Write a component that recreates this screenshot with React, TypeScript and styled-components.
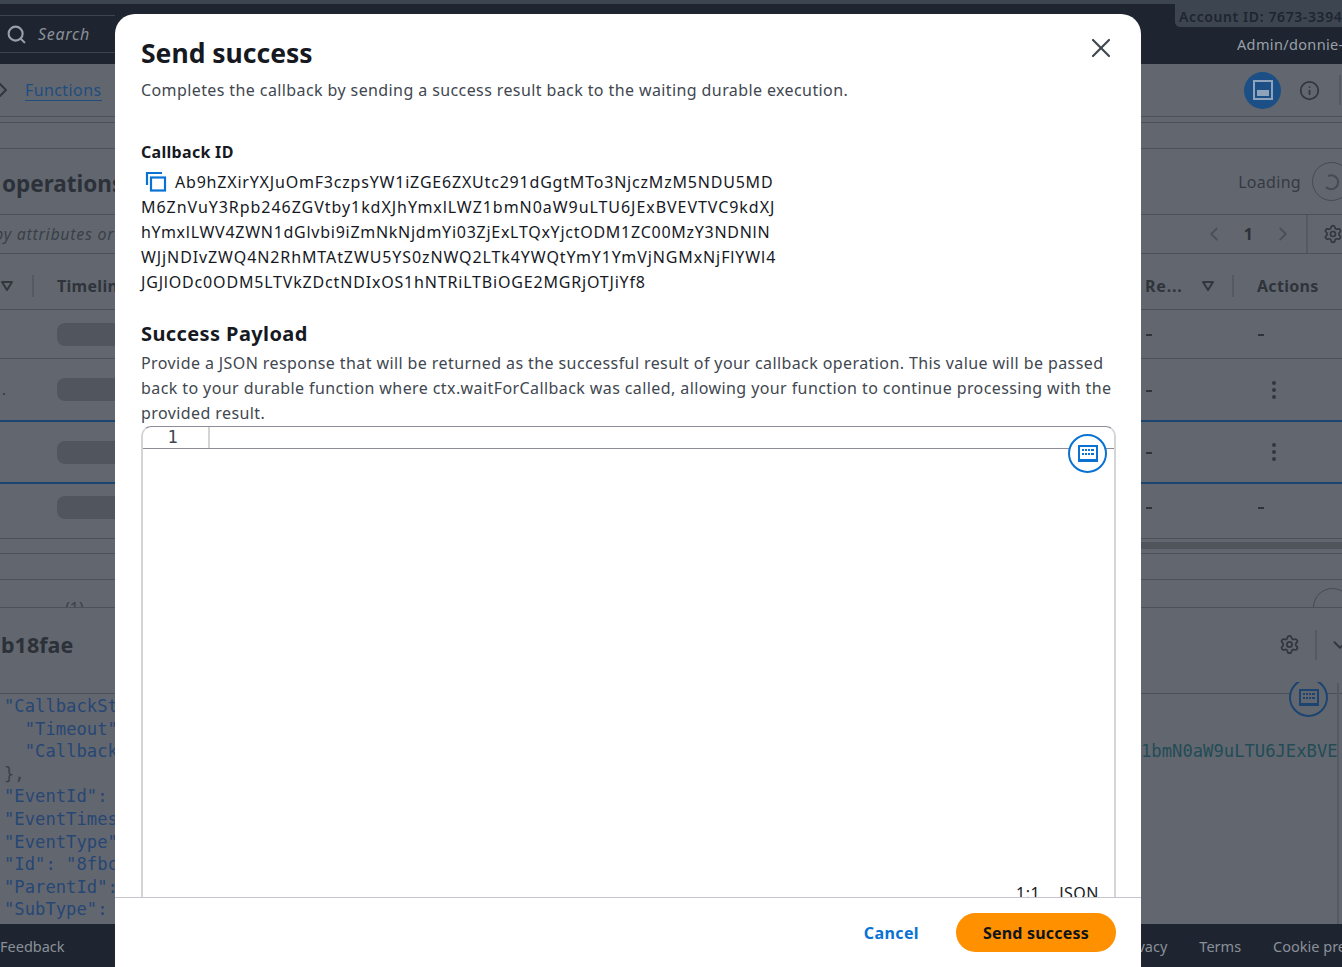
import React from 'react'
import styled, { createGlobalStyle } from 'styled-components'
import { ChevronDown, ChevronLeft, ChevronRight, Info, Search, Settings, X } from 'lucide-react'

const callbackLines = [
  { text: 'Ab9hZXirYXJuOmF3czpsYW1iZGE6ZXUtc291dGgtMTo3NjczMzM5NDU5MD', spacing: 0.8 },
  { text: 'M6ZnVuY3Rpb246ZGVtby1kdXJhYmxlLWZ1bmN0aW9uLTU6JExBVEVTVC9kdXJ', spacing: 0.95 },
  { text: 'hYmxlLWV4ZWN1dGlvbi9iZmNkNjdmYi03ZjExLTQxYjctODM1ZC00MzY3NDNlN', spacing: 0.73 },
  { text: 'WJjNDIvZWQ4N2RhMTAtZWU5YS0zNWQ2LTk4YWQtYmY1YmVjNGMxNjFlYWl4', spacing: 0.9 },
  { text: 'JGJlODc0ODM5LTVkZDctNDIxOS1hNTRiLTBiOGE2MGRjOTJiYf8', spacing: 0.82 },
]

const codeLines = [
  { text: '"CallbackSt', indent: 0 },
  { text: '"Timeout"', indent: 2 },
  { text: '"Callback', indent: 2 },
  { text: '},', indent: 0, plain: true },
  { text: '"EventId":', indent: 0 },
  { text: '"EventTimes', indent: 0 },
  { text: '"EventType"', indent: 0 },
  { text: '"Id": "8fbc', indent: 0 },
  { text: '"ParentId":', indent: 0 },
  { text: '"SubType":', indent: 0 },
]

const GlobalStyle = createGlobalStyle`
  html, body {
    margin: 0;
    padding: 0;
    background: #62676f;
  }
  body {
    font-family: "Noto Sans", "Open Sans", sans-serif;
    overflow: hidden;
  }
  * {
    box-sizing: border-box;
  }
`

const Page = styled.div`
  position: relative;
  display: flex;
  flex-direction: column;
  height: 967px;
  overflow: hidden;
  background: #62676f;
  color: #32373e;
`

const TopStrip = styled.div`
  height: 4px;
  background: #3d4650;
`

const Nav = styled.header`
  display: flex;
  justify-content: space-between;
  height: 60px;
  background: #1e2530;
`

const SearchBox = styled.div`
  display: flex;
  align-items: center;
  gap: 11px;
  width: 115px;
  height: 38px;
  margin-top: 11px;
  padding-left: 6px;
  border-top: 1px solid #3d4650;
  border-bottom: 1px solid #3d4650;
  color: #8a9099;
  font-size: 16px;
  font-style: italic;
  letter-spacing: 0.7px;
`

const NavRight = styled.div`
  display: flex;
  flex-direction: column;
  align-items: flex-end;
  width: 167px;
`

const AccountChip = styled.div`
  width: 100%;
  height: 23px;
  padding-left: 4px;
  border-bottom-left-radius: 5px;
  background: #3d4650;
  color: #1e2530;
  font-size: 14px;
  font-weight: 600;
  line-height: 26px;
  letter-spacing: 0.6px;
  white-space: nowrap;
  overflow: hidden;
`

const UserName = styled.div`
  width: 105px;
  margin-top: 6px;
  color: #9aa0a8;
  font-size: 14.5px;
  line-height: 22px;
  letter-spacing: 0.35px;
  white-space: nowrap;
  overflow: hidden;
`

const Band = styled.div<{ $h: number; $clip?: boolean; $selected?: boolean; $top?: number; $bottom?: number }>`
  display: flex;
  flex-shrink: 0;
  justify-content: space-between;
  align-items: center;
  height: ${(p) => p.$h}px;
  padding-top: ${(p) => p.$top ?? 0}px;
  padding-bottom: ${(p) => p.$bottom ?? 0}px;
  border-bottom: ${(p) => (p.$selected ? '2px solid #1c4471' : '1px solid #4c5159')};
  overflow: ${(p) => (p.$clip ? 'hidden' : 'visible')};
`

const Side = styled.div<{ $pad?: number; $gap?: number }>`
  display: flex;
  align-items: center;
  gap: ${(p) => p.$gap ?? 0}px;
  padding-left: ${(p) => p.$pad ?? 0}px;
  white-space: nowrap;
`

const Crumb = styled.a`
  color: #1f4d80;
  font-size: 16px;
  line-height: 20px;
  letter-spacing: 0.4px;
  border-bottom: 1px solid #1f4d80;
`

const PanelToggle = styled.span`
  display: flex;
  align-items: center;
  justify-content: center;
  width: 37px;
  height: 37px;
  border-radius: 50%;
  background: #1b4f86;
`

const IconSlot = styled.span<{ $w: number }>`
  display: flex;
  justify-content: center;
  width: ${(p) => p.$w}px;
  color: #32373e;
`

const VDivider = styled.span<{ $h?: number; $c?: string }>`
  display: block;
  width: 2px;
  height: ${(p) => p.$h ?? 24}px;
  background: ${(p) => p.$c ?? '#555a62'};
`

const SectionTitle = styled.h2`
  margin: 0;
  padding: 3px 0 0 2px;
  color: #2c3139;
  font-size: 22.5px;
  font-weight: 700;
`

const LoadingText = styled.span`
  color: #353a42;
  font-size: 16px;
  letter-spacing: 0.3px;
`

const SpinnerRing = styled.span`
  display: flex;
  align-items: center;
  justify-content: center;
  width: 39px;
  height: 39px;
  margin-right: -9px;
  border: 1px solid #454b53;
  border-radius: 50%;
  flex-shrink: 0;
`

const FilterHint = styled.span`
  margin-left: -6px;
  color: #3a4048;
  font-size: 16px;
  font-style: italic;
  letter-spacing: 0.7px;
`

const PageNumber = styled.span`
  color: #2c3139;
  font-size: 16px;
  font-weight: 700;
`

const ColumnTitle = styled.span<{ $ls?: number }>`
  color: #2f343b;
  font-size: 16px;
  font-weight: 700;
  letter-spacing: ${(p) => p.$ls ?? 0.3}px;
`

const RightCells = styled.div`
  display: grid;
  grid-template-columns: 112px 85px;
  align-items: center;
  width: 197px;
`

const HeaderCell = styled.div`
  display: flex;
  align-items: center;
  gap: 18px;
`

const SkeletonPill = styled.span`
  display: block;
  width: 100px;
  height: 23px;
  border-radius: 8px;
  background: #51565e;
`

const RowMark = styled.span`
  position: absolute;
  left: 2px;
  color: #2c3139;
  font-size: 14px;
`

const Dash = styled.span`
  display: block;
  width: 6px;
  height: 2px;
  margin: 2px 0 0 1px;
  background: #2f343b;
`

const Kebab = styled.span`
  display: flex;
  flex-direction: column;
  gap: 3px;
  margin-left: 15px;
  i {
    display: block;
    width: 4px;
    height: 4px;
    border-radius: 50%;
    background: #32373e;
  }
`

const ScrollTrack = styled.div`
  width: 201px;
  height: 7px;
  margin-top: -1px;
  background: #50555c;
`

const ClippedCount = styled.span`
  color: #3a4048;
  font-size: 16px;
  transform: translateY(14px);
`

const ClippedRing = styled.span`
  display: block;
  width: 39px;
  height: 39px;
  margin: 28px -10px 0 0;
  border: 1px solid #454b53;
  border-radius: 50%;
`

const DetailTitle = styled.h3`
  margin: 0;
  padding-left: 1px;
  color: #2c3139;
  font-size: 21.5px;
  font-weight: 700;
`

const DetailActions = styled.div`
  display: flex;
  align-items: center;
  gap: 17px;
  margin-right: -9px;
`

const CodePanel = styled.section`
  position: relative;
  flex: 1;
  min-height: 0;
  padding: 1px 0 0 4px;
`

const CodeLine = styled.div<{ $indent: number; $plain?: boolean }>`
  padding-left: ${(p) => p.$indent * 10.37}px;
  color: ${(p) => (p.$plain ? '#3a4048' : '#274674')};
  font-family: "DejaVu Sans Mono", "Liberation Mono", monospace;
  font-size: 17.2px;
  line-height: 22.6px;
  white-space: pre;
`

const CodeOverlay = styled.div`
  position: absolute;
  top: -11px;
  right: 3px;
  bottom: 0;
  width: 198px;
  padding-top: 57px;
  border-right: 2px solid #555a62;
`

const TealValue = styled.div`
  color: #234c57;
  font-family: "DejaVu Sans Mono", "Liberation Mono", monospace;
  font-size: 17.2px;
  line-height: 22.6px;
  white-space: nowrap;
`

const FloatingKeyboard = styled.span`
  position: absolute;
  top: -5px;
  right: 9px;
  display: flex;
  align-items: center;
  justify-content: center;
  width: 39px;
  height: 39px;
  border: 2px solid #1c4471;
  border-radius: 50%;
  background: #62676f;
  color: #1c4471;
  clip-path: inset(4px 0 0 0);
`

const Footer = styled.footer`
  display: flex;
  flex-shrink: 0;
  justify-content: space-between;
  align-items: center;
  height: 43px;
  background: #1e2530;
  color: #8a9099;
  font-size: 14.5px;
  white-space: nowrap;
`

const FooterLinks = styled.div`
  display: flex;
  gap: 32px;
  width: 250px;
  padding-left: 27px;
`

/* the dialog */

const Modal = styled.div`
  position: absolute;
  top: 14px;
  bottom: 0;
  left: 115px;
  display: flex;
  flex-direction: column;
  width: 1026px;
  border-radius: 20px 20px 0 0;
  background: #fff;
  color: #16191f;
`

const CloseButton = styled.button`
  position: absolute;
  top: 18px;
  right: 24px;
  display: flex;
  padding: 0;
  border: 0;
  background: none;
  color: #414750;
`

const ModalBody = styled.div`
  flex: 1;
  min-height: 0;
  padding: 20px 25px 0 26px;
  overflow: hidden;
`

const ModalTitle = styled.h1`
  margin: 0;
  font-size: 26.5px;
  font-weight: 700;
  line-height: 38px;
`

const ModalSubtitle = styled.p`
  margin: 6px 0 0;
  color: #414750;
  font-size: 16px;
  line-height: 25px;
  letter-spacing: 0.4px;
`

const FieldLabel = styled.div`
  margin-top: 37px;
  font-size: 16px;
  font-weight: 700;
  line-height: 25px;
  letter-spacing: 0.3px;
`

const IdBlock = styled.div`
  margin-top: 4px;
`

const IdLine = styled.div<{ $spacing: number }>`
  display: flex;
  align-items: center;
  height: 25px;
  color: #16191f;
  font-size: 16px;
  letter-spacing: ${(p) => p.$spacing}px;
  white-space: nowrap;
`

const CopyGlyph = styled.svg`
  flex-shrink: 0;
  margin: 0 8px 0 4px;
`

const PayloadTitle = styled.h2`
  margin: 25px 0 0;
  font-size: 20px;
  font-weight: 700;
  line-height: 30px;
  letter-spacing: 0.4px;
`

const PayloadHint = styled.p`
  margin: 2px 0 0;
  color: #414750;
  font-size: 16px;
  line-height: 25px;
  letter-spacing: 0.41px;
`

const Editor = styled.div`
  position: relative;
  display: flex;
  flex-direction: column;
  width: 975px;
  height: 490px;
  border: 2px solid #d5d5d8;
  border-top: 1px solid #8d8d99;
  border-radius: 10px 10px 0 0;
`

const EditorLine = styled.div`
  display: flex;
  height: 22px;
  border-bottom: 1px solid #8d8d99;
`

const Gutter = styled.div`
  width: 67px;
  padding-right: 6px;
  border-right: 2px solid #d5d5d8;
  color: #414750;
  font-family: "DejaVu Sans Mono", monospace;
  font-size: 17px;
  line-height: 21px;
  text-align: center;
`

const KeyboardButton = styled.button`
  position: absolute;
  top: 7px;
  right: 7px;
  display: flex;
  align-items: center;
  justify-content: center;
  width: 39px;
  height: 39px;
  padding: 0;
  border: 2px solid #0972d3;
  border-radius: 50%;
  background: #fff;
  color: #0972d3;
`

const StatusBar = styled.div`
  display: flex;
  justify-content: flex-end;
  gap: 19px;
  margin-top: auto;
  padding: 0 15px 9px 0;
  font-size: 16px;
  line-height: 24px;
  letter-spacing: 0.5px;
`

const ModalFooter = styled.div`
  display: flex;
  flex-shrink: 0;
  justify-content: flex-end;
  align-items: center;
  gap: 37px;
  height: 70px;
  padding: 0 25px 0 0;
  border-top: 1px solid #c6c6cd;
`

const CancelButton = styled.button`
  padding: 0;
  border: 0;
  background: none;
  color: #0972d3;
  font-family: inherit;
  font-size: 16px;
  font-weight: 700;
  letter-spacing: 0.4px;
`

const PrimaryButton = styled.button`
  width: 160px;
  height: 39px;
  border: 0;
  border-radius: 20px;
  background: #ff9000;
  color: #0f141a;
  font-family: inherit;
  font-size: 16px;
  font-weight: 700;
  letter-spacing: 0.2px;
`

const CaretOutline = () => (
  <svg width="14" height="12" viewBox="0 0 14 12" fill="none">
    <path d="M2 2h10L7 10z" stroke="#32373e" strokeWidth="2" strokeLinejoin="round" />
  </svg>
)

const KeyboardIcon = () => (
  <svg width="20" height="17" viewBox="0 0 20 17" fill="currentColor">
    <path d="M0 0h20v17H0zM2 2v12h16V2z" fillRule="evenodd" />
    <path d="M4 4h2v2H4zM7 4h2v2H7zM10 4h2v2h-2zM13 4h3v2h-3zM4 8h2v2H4zM7 8h2v2H7zM10 8h2v2h-2zM13 8h3v2h-3z" />
  </svg>
)

const PanelIcon = () => (
  <svg width="20" height="20" viewBox="0 0 20 20" fill="none">
    <rect x="1" y="1" width="18" height="18" stroke="#8fa3ba" strokeWidth="2" />
    <rect x="4" y="10" width="12" height="6" fill="#8fa3ba" />
  </svg>
)

const SpinnerArc = () => (
  <svg width="20" height="20" viewBox="0 0 20 20" fill="none">
    <path d="M6 4a7 7 0 1 1-2 11" stroke="#454b53" strokeWidth="2" />
  </svg>
)

const KebabMenu = () => (
  <Kebab>
    <i />
    <i />
    <i />
  </Kebab>
)

const TableRow = ({
  h,
  selected,
  menu,
  mark,
  bottom,
}: {
  h: number
  selected?: boolean
  menu?: boolean
  mark?: boolean
  bottom?: number
}) => (
  <Band $h={h} $selected={selected} $bottom={bottom}>
    <Side $pad={57}>
      {mark && <RowMark>.</RowMark>}
      <SkeletonPill />
    </Side>
    <RightCells>
      <Dash />
      {menu ? <KebabMenu /> : <Dash />}
    </RightCells>
  </Band>
)

export default function App() {
  return (
    <Page>
      <GlobalStyle />
      <TopStrip />
      <Nav>
        <SearchBox>
          <Search size={21} strokeWidth={2.4} color="#9aa0a8" />
          Search
        </SearchBox>
        <NavRight>
          <AccountChip>Account ID: 7673-3394-5903</AccountChip>
          <UserName>Admin/donnie-prakoso</UserName>
        </NavRight>
      </Nav>

      <Band $h={53}>
        <Side $gap={10}>
          <ChevronRight size={24} color="#32373e" style={{ marginLeft: -9 }} />
          <Crumb>Functions</Crumb>
        </Side>
        <Side $gap={12} style={{ marginRight: 1 }}>
          <PanelToggle>
            <PanelIcon />
          </PanelToggle>
          <IconSlot $w={32}>
            <Info size={21} />
          </IconSlot>
          <VDivider $h={30} style={{ marginLeft: 2 }} />
        </Side>
      </Band>
      <Band $h={6} />
      <Band $h={26} />
      <Band $h={66}>
        <SectionTitle>operations</SectionTitle>
        <Side $gap={11}>
          <LoadingText>Loading</LoadingText>
          <SpinnerRing>
            <SpinnerArc />
          </SpinnerRing>
        </Side>
      </Band>
      <Band $h={39}>
        <FilterHint>by attributes or</FilterHint>
        <Side $gap={19} style={{ marginRight: -1 }}>
          <ChevronLeft size={22} color="#4a5058" />
          <PageNumber>1</PageNumber>
          <ChevronRight size={22} color="#4a5058" />
          <VDivider $h={38} style={{ marginLeft: -7 }} />
          <Settings size={20} color="#32373e" style={{ marginLeft: -4 }} />
        </Side>
      </Band>
      <Band $h={56} $top={8}>
        <Side $gap={18}>
          <CaretOutline />
          <VDivider $h={22} />
          <ColumnTitle style={{ marginLeft: 5 }}>Timeline</ColumnTitle>
        </Side>
        <RightCells>
          <HeaderCell>
            <ColumnTitle $ls={0.8}>Re...</ColumnTitle>
            <CaretOutline />
            <VDivider $h={22} style={{ marginLeft: -1 }} />
          </HeaderCell>
          <ColumnTitle>Actions</ColumnTitle>
        </RightCells>
      </Band>
      <TableRow h={49} />
      <TableRow h={63} selected menu mark />
      <TableRow h={62} selected menu />
      <TableRow h={55} bottom={8} />
      <Band $h={15}>
        <span />
        <ScrollTrack />
      </Band>
      <Band $h={26} />
      <Band $h={28} $clip>
        <Side $pad={65}>
          <ClippedCount>(1)</ClippedCount>
        </Side>
        <ClippedRing />
      </Band>
      <Band $h={86} $bottom={12}>
        <DetailTitle>b18fae</DetailTitle>
        <DetailActions>
          <Settings size={21} color="#32373e" />
          <VDivider $h={30} style={{ marginLeft: -2 }} />
          <ChevronDown size={22} color="#32373e" style={{ marginLeft: -5 }} />
        </DetailActions>
      </Band>
      <CodePanel>
        {codeLines.map((line) => (
          <CodeLine key={line.text} $indent={line.indent} $plain={line.plain}>
            {line.text}
          </CodeLine>
        ))}
        <CodeOverlay>
          <TealValue>1bmN0aW9uLTU6JExBVE</TealValue>
          <FloatingKeyboard>
            <KeyboardIcon />
          </FloatingKeyboard>
        </CodeOverlay>
      </CodePanel>
      <Footer>
        <span>Feedback</span>
        <FooterLinks>
          <span>Privacy</span>
          <span>Terms</span>
          <span>Cookie preferences</span>
        </FooterLinks>
      </Footer>

      <Modal role="dialog">
        <CloseButton aria-label="Close">
          <X size={32} strokeWidth={1.6} />
        </CloseButton>
        <ModalBody>
          <ModalTitle>Send success</ModalTitle>
          <ModalSubtitle>
            Completes the callback by sending a success result back to the waiting durable execution.
          </ModalSubtitle>
          <FieldLabel>Callback ID</FieldLabel>
          <IdBlock>
            {callbackLines.map((line, i) => (
              <IdLine key={line.text} $spacing={line.spacing}>
                {i === 0 && (
                  <CopyGlyph width="22" height="22" viewBox="0 0 22 22" fill="none" stroke="#0972d3" strokeWidth="2.2">
                    <path d="M2 14V2h15" />
                    <rect x="6" y="6.5" width="14" height="13" />
                  </CopyGlyph>
                )}
                {line.text}
              </IdLine>
            ))}
          </IdBlock>
          <PayloadTitle>Success Payload</PayloadTitle>
          <PayloadHint>
            Provide a JSON response that will be returned as the successful result of your callback operation. This
            value will be passed back to your durable function where ctx.waitForCallback was called, allowing your
            function to continue processing with the provided result.
          </PayloadHint>
          <Editor>
            <EditorLine>
              <Gutter>1</Gutter>
            </EditorLine>
            <KeyboardButton aria-label="Keyboard">
              <KeyboardIcon />
            </KeyboardButton>
            <StatusBar>
              <span>1:1</span>
              <span>JSON</span>
            </StatusBar>
          </Editor>
        </ModalBody>
        <ModalFooter>
          <CancelButton>Cancel</CancelButton>
          <PrimaryButton>Send success</PrimaryButton>
        </ModalFooter>
      </Modal>
    </Page>
  )
}
